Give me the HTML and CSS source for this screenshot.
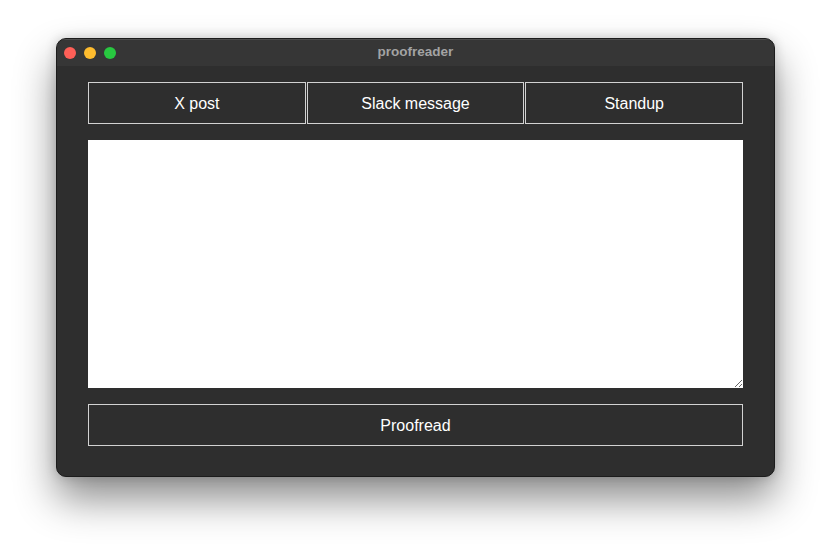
FILE: index.html
```html
<!DOCTYPE html>
<html>
<head>
<meta charset="utf-8">
<title>proofreader</title>
<link rel="stylesheet" href="styles.css">
</head>
<body>
<div class="window">
  <div class="titlebar">
    <div class="lights">
      <span class="light red"></span>
      <span class="light yellow"></span>
      <span class="light green"></span>
    </div>
    <div class="title">proofreader</div>
  </div>
  <div class="content">
    <div class="tabs">
      <button class="btn">X post</button>
      <button class="btn">Slack message</button>
      <button class="btn">Standup</button>
    </div>
    <textarea class="editor"></textarea>
    <button class="btn wide">Proofread</button>
  </div>
</div>
</body>
</html>
```
FILE: styles.css
```css
html, body {
  margin: 0;
  padding: 0;
  background: #ffffff;
}
body {
  padding: 38px 0 0 56px;
  min-height: 100vh;
  box-sizing: border-box;
  font-family: "Liberation Sans", Arial, sans-serif;
}
.window {
  width: 719px;
  height: 439px;
  box-sizing: border-box;
  background: #2e2e2e;
  border: 1px solid #1c1c1c;
  border-radius: 10px;
  overflow: hidden;
  box-shadow: 0 22px 40px rgba(0,0,0,0.45), 0 0 12px rgba(0,0,0,0.18);
  display: flex;
  flex-direction: column;
}
.titlebar {
  height: 27px;
  background: #363636;
  display: flex;
  align-items: center;
  position: relative;
  box-shadow: inset 0 1px 0 rgba(255,255,255,0.12);
}
.lights {
  display: flex;
  gap: 8px;
  padding-left: 7px;
}
.light {
  width: 12px;
  height: 12px;
  border-radius: 50%;
  display: block;
}
.red { background: #fe5f57; }
.yellow { background: #febc2e; }
.green { background: #28c840; }
.title {
  position: absolute;
  left: 0;
  right: 0;
  text-align: center;
  color: #a3a3a3;
  font-weight: bold;
  font-size: 13.5px;
  top: 5px;
}
.content {
  padding: 16px 31px 0 31px;
  display: flex;
  flex-direction: column;
  gap: 16px;
}
.tabs {
  display: flex;
  gap: 1px;
}
.btn {
  flex: 1;
  height: 42px;
  background: #2e2e2e;
  border: 1px solid #d2d2d2;
  color: #ffffff;
  font-family: "Liberation Sans", Arial, sans-serif;
  font-size: 16px;
  padding: 2px 0 0 0;
  margin: 0;
}
.wide {
  flex: none;
  width: 100%;
}
.editor {
  height: 248px;
  box-sizing: border-box;
  margin: 0;
  border: none;
  background: #ffffff;
  resize: vertical;
  display: block;
  width: 100%;
}
```
